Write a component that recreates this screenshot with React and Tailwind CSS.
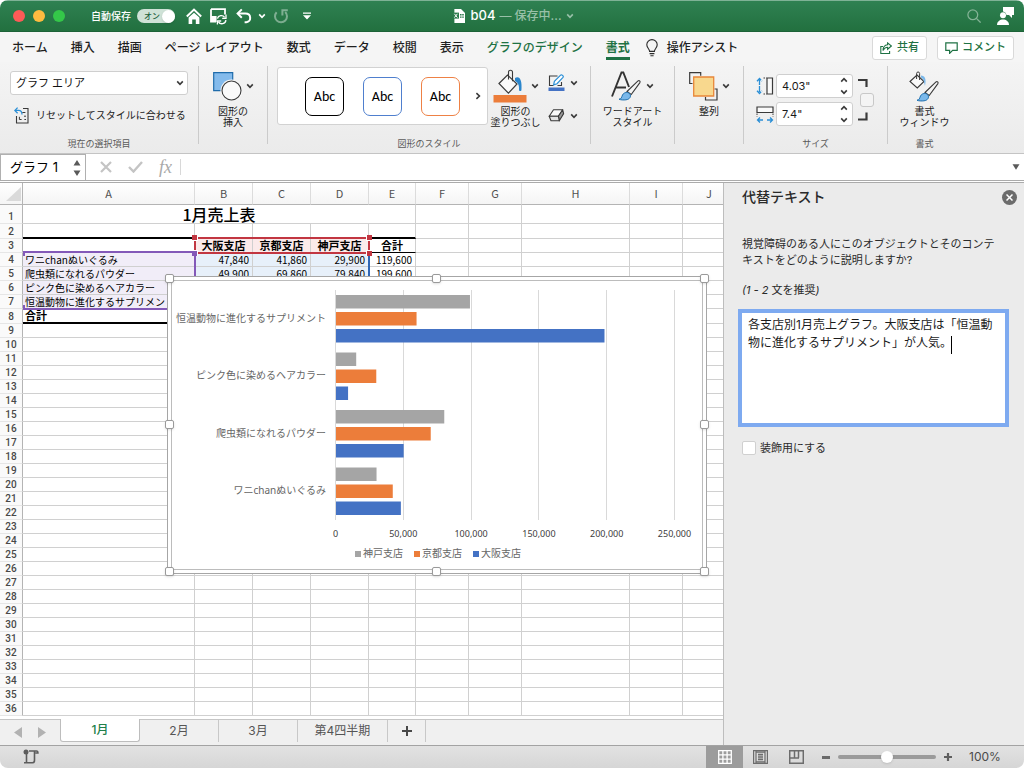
import React from "react";

const COLS = ["A", "B", "C", "D", "E", "F", "G", "H", "I", "J"];

const DATA = {
  4: { name: "ワニchanぬいぐるみ", cells: ["47,840", "41,860", "29,900"], sum: "119,600" },
  5: { name: "爬虫類になれるパウダー", cells: ["49,900", "69,860", "79,840"], sum: "199,600" },
  6: { name: "ピンク色に染めるヘアカラー", cells: ["", "", ""], sum: "" },
  7: { name: "恒温動物に進化するサプリメント", cells: ["", "", ""], sum: "" },
};

const SERIES = [
  { name: "神戸支店", color: "#a5a5a5" },
  { name: "京都支店", color: "#ec7d3a" },
  { name: "大阪支店", color: "#4472c4" },
];

const GROUPS = [
  { name: "恒温動物に進化するサプリメント", values: [98800, 59400, 198000] },
  { name: "ピンク色に染めるヘアカラー", values: [14900, 29700, 8900] },
  { name: "爬虫類になれるパウダー", values: [79840, 69860, 49900] },
  { name: "ワニchanぬいぐるみ", values: [29900, 41860, 47840] },
];

const TICKS = ["0", "50,000", "100,000", "150,000", "200,000", "250,000"];

function Chevron({ className = "text-[#3a3a3a]" }) {
  return (
    <svg className={"h-2 w-2 shrink-0 " + className} viewBox="0 0 8 8" fill="none" stroke="currentColor" strokeWidth="1.6">
      <path d="M1.2 2.4 4 5.4 6.8 2.4" />
    </svg>
  );
}

function TitleBar() {
  return (
    <header className="flex h-8 shrink-0 items-center border-t border-b border-t-[#7fb296] border-b-[#1d6238] bg-linear-to-b from-[#2f8152] to-[#22703f] text-white">
      <div className="flex flex-1 items-center pl-[13px]">
        <div className="flex gap-2">
          <button aria-label="閉じる" className="size-3 rounded-full bg-[#fc5b57]" />
          <button aria-label="最小化" className="size-3 rounded-full bg-[#fdbb40]" />
          <button aria-label="拡大" className="size-3 rounded-full bg-[#34c749]" />
        </div>
        <label htmlFor="autosave" className="ml-[26px] text-[10px] font-medium">自動保存</label>
        <button id="autosave" role="switch" aria-checked="true" className="ml-[6px] flex h-[14px] w-[38px] items-center justify-between rounded-full bg-[#cfe2d7] pl-[7px] text-[8px] font-medium text-[#22603c]">
          オン
          <span className="size-[13px] rounded-full bg-white shadow" />
        </button>
        <button aria-label="ホーム" className="ml-[11px]">
          <svg className="h-4 w-4" viewBox="0 0 16 16" fill="none">
            <path d="M.8 8.4 8 1.6l7.2 6.8" stroke="#fff" strokeWidth="2" />
            <path d="M2.6 9.6 8 4.7l5.4 4.9V16H9.8v-4.4H6.2V16H2.6z" fill="#fff" />
          </svg>
        </button>
        <button aria-label="保存" className="ml-2">
          <svg className="h-[17px] w-[17px]" viewBox="0 0 17 17" fill="none">
            <path d="M1 1.2h14v5.2M1 1.2v12.4h5" stroke="#fff" strokeWidth="1.8" />
            <path d="M1 8h5.6v6H2.4L1 12.6z" fill="#fff" />
            <path d="M7.4 10.6a4 4 0 0 1 7.2-1.2M15.9 12.2a4 4 0 0 1-7.4 1.6" stroke="#fff" strokeWidth="1.4" />
            <path d="M16 6.6v3.8h-3.8M7.4 16.6v-3.6h3.8" stroke="#fff" strokeWidth="1.3" />
          </svg>
        </button>
        <button aria-label="元に戻す" className="ml-[9px]">
          <svg className="h-4 w-4" viewBox="0 0 16 16" fill="none" stroke="#fff" strokeWidth="2">
            <path d="M5.8 1.4 1.6 5.6l4.2 4.2" />
            <path d="M2 5.6h7.4c6.2 0 6.2 8.2 1 8.6H8.6" />
          </svg>
        </button>
        <button aria-label="元に戻す履歴" className="ml-[6px]"><Chevron className="text-white" /></button>
        <button aria-label="繰り返し" className="ml-[7px] opacity-40">
          <svg className="h-4 w-4" viewBox="0 0 16 16" fill="none" stroke="#fff" strokeWidth="2">
            <path d="M3.6 4.2a6 6 0 1 0 8.6-.2" />
            <path d="M9.4 7.4V2.2h5.4" />
          </svg>
        </button>
        <button aria-label="ツールバーのカスタマイズ" className="ml-[14px]">
          <svg className="h-2 w-2" viewBox="0 0 8 8" fill="#fff"><path d="M0 .4h8v1.4H0zM0 3.2h8L4 7.6z" /></svg>
        </button>
      </div>
      <div className="flex items-center text-[13px] font-medium">
        <svg className="mr-[5px] h-[14px] w-3" viewBox="0 0 12 14">
          <path d="M1.4 0H8l4 4v10H1.4z" fill="#fff" />
          <path d="M0 3.6h6v6H0z" fill="#2b7a4c" />
          <path d="m1.4 4.8 3 3.8M4.4 4.8l-3 3.8" stroke="#fff" strokeWidth="1" />
          <path d="M7 5h1.6v1.4H7zM9.2 5h1.6v1.4H9.2zM7 7.4h1.6v1.4H7zM9.2 7.4h1.6v1.4H9.2z" fill="#2b7a4c" />
        </svg>
        <span>b04</span>
        <span className="ml-1 text-xs text-[#98c0a8]">— 保存中...</span>
        <Chevron className="ml-1 text-[#98c0a8]" />
      </div>
      <div className="flex flex-1 items-center justify-end gap-4 pr-[10px]">
        <button aria-label="検索">
          <svg className="h-[14px] w-[14px]" viewBox="0 0 14 14" fill="none" stroke="#84b396" strokeWidth="1.3">
            <circle cx="5.8" cy="5.8" r="4.9" /><path d="m9.4 9.4 4.2 4.2" />
          </svg>
        </button>
        <button aria-label="アカウント">
          <svg className="h-[18px] w-[17px]" viewBox="0 0 17 18" fill="#fff">
            <path d="M6 0h11v8h-2v3l-3-3H9.4A4 4 0 0 0 6 4.4z" />
            <circle cx="6" cy="8.3" r="3" />
            <path d="M0 18c0-7.4 12-7.4 12 0z" />
          </svg>
        </button>
      </div>
    </header>
  );
}

function RibbonTabs() {
  const tabs = ["ホーム", "挿入", "描画", "ページ レイアウト", "数式", "データ", "校閲", "表示"];
  return (
    <nav className="flex h-[30px] shrink-0 items-center bg-[#f5f5f5] pt-[3px] pb-[2px] pl-3 text-xs font-medium text-[#1f1f1f]">
      <div className="flex h-full items-center gap-[23px] whitespace-nowrap">
        {tabs.map((t) => (
          <button key={t}>{t}</button>
        ))}
        <button className="text-[#1f7244]">グラフのデザイン</button>
        <button className="h-full border-y-3 border-t-transparent border-b-[#1f7244] font-bold text-[#1f7244]">書式</button>
      </div>
      <button className="ml-4 flex items-center gap-[9px] whitespace-nowrap">
        <svg className="h-[18px] w-3" viewBox="0 0 12 18" fill="none" stroke="#2b2b2b" strokeWidth="1.1">
          <path d="M3.6 12.4c0-2.6-2.8-3.4-2.8-6.6a5.2 5.2 0 0 1 10.4 0c0 3.2-2.8 4-2.8 6.6z" />
          <path d="M3.6 14.6h4.8M4.4 16.8h3.2" />
        </svg>
        操作アシスト
      </button>
      <div className="ml-auto flex gap-[10px] pr-[10px] whitespace-nowrap text-[#1f7244]">
        <button className="flex h-6 w-[55px] items-center justify-center gap-[5px] rounded-[3px] border border-[#d9d9d9] bg-white">
          <svg className="h-3 w-3" viewBox="0 0 12 12" fill="none" stroke="currentColor" strokeWidth="1.1">
            <path d="M3 4.5H.8v7h8.8V9" />
            <path d="M7.6.9 11.4 4 7.6 7.2V5.3C5.2 5.3 4 6.6 3 8.6c0-3.6 1.8-5.6 4.600-5.900z" />
          </svg>
          <span className="text-[11px]">共有</span>
        </button>
        <button className="flex h-6 w-[77px] items-center justify-center gap-1 rounded-[3px] border border-[#d9d9d9] bg-white">
          <svg className="h-3 w-[13px]" viewBox="0 0 13 12" fill="none" stroke="currentColor" strokeWidth="1.2">
            <path d="M.8.8h11.4v7.6H7.6l-3 3v-3H.8z" />
          </svg>
          <span className="text-[11px]">コメント</span>
        </button>
      </div>
    </nav>
  );
}

function Group({ caption, width, children, last }) {
  return (
    <section className={"flex h-[78px] shrink-0 flex-col " + (last ? "" : "border-r border-[#cbcbcb] ") + width}>
      <div className="flex h-[71px] shrink-0">{children}</div>
      <div className="h-[7px] text-center text-[9px] leading-[14px] text-[#5a5a5a]">{caption}</div>
    </section>
  );
}

function BigButton({ icon, lines, className = "" }) {
  return (
    <button className={"flex flex-col items-center text-[10px] leading-[11px] whitespace-nowrap text-[#1d1d1d] " + className}>
      <span className="flex h-10 items-center gap-1">{icon}</span>
      {lines.map((l) => (
        <span key={l}>{l}</span>
      ))}
    </button>
  );
}

function Brush({ x = 0, y = 0 }) {
  return (
    <g transform={`translate(${x} ${y})`}>
      <path d="M8 11.5 19 .9c1.2-.9 2.6.4 1.9 1.7l-8.7 11.900z" fill="#f5f5f5" stroke="#3a3a3a" strokeWidth="1.1" />
      <path d="M0 19.2c2.6 0 2.4-2 3.6-4.4 1.4-2.600 5.600-3.400 7.400-.6 1.400 2.400-.4 5.200-4 5.600-2.600.3-5.200.2-7-.6z" fill="#7ab8ea" stroke="#1d6fae" strokeWidth="1" />
    </g>
  );
}

function SizeField({ id, label, value, icon }) {
  return (
    <div className="flex h-6 items-center">
      <label htmlFor={id} aria-label={label} className="w-5">{icon}</label>
      <div className="flex h-6 w-[77px] items-center rounded-[3px] border border-[#cfcfcf] bg-white pr-[4px] pl-[5px]">
        <input id={id} defaultValue={value} className="w-0 flex-1 font-[family-name:Inter,sans-serif] text-[11px] text-[#1a1a1a] outline-none" />
        <span className="flex flex-col gap-1">
          <button aria-label={label + "を増やす"} className="rotate-180"><Chevron /></button>
          <button aria-label={label + "を減らす"}><Chevron /></button>
        </span>
      </div>
    </div>
  );
}

function Ribbon() {
  return (
    <div className="flex h-[92px] shrink-0 items-start border-b border-[#c4c4c4] bg-linear-to-b from-[#f4f4f4] to-[#ebebeb] pt-1">
      <Group caption="現在の選択項目" width="w-[199px]">
        <div className="flex flex-col gap-2 pt-[5px] pl-[10px]">
          <div className="relative flex items-center">
            <select aria-label="グラフ要素" className="h-6 w-[178px] appearance-none rounded-[3px] border border-[#cfcfcf] bg-white pl-[5px] text-[11px] text-[#111]">
              <option>グラフ エリア</option>
            </select>
            <span className="pointer-events-none absolute right-1"><Chevron /></span>
          </div>
          <button className="flex h-6 items-center gap-[7px] pl-1 text-[10px] whitespace-nowrap text-[#1a1a1a]">
            <svg className="h-[17px] w-[15px]" viewBox="0 0 15 17" fill="none">
              <path d="M9 1.500h5v14.500H2.500V9" stroke="#3a3a3a" strokeWidth="1.100" />
              <path d="M3.600.6.900 3.400l2.700 2.800M1 3.400h3.600c2.600 0 3.400 1.800 3.400 4.200" stroke="#2b8fd6" strokeWidth="1.300" />
              <path d="M8.400 5.500h3M10.400 12.500h1.600M5.400 9.800v2.700h2.200M10 9.200h2" stroke="#3a3a3a" strokeWidth="1" />
            </svg>
            リセットしてスタイルに合わせる
          </button>
        </div>
      </Group>

      <Group caption="" width="w-[69px]">
        <BigButton
          className="w-full"
          lines={["図形の", "挿入"]}
          icon={
            <>
              <svg className="h-[29px] w-[29px]" viewBox="0 0 29 29">
                <path d="M.7.700h19v18H.7z" fill="#84bbec" stroke="#1f6cab" strokeWidth="1.200" />
                <circle cx="18.500" cy="18.500" r="11" fill="#f5f5f5" />
                <circle cx="18.500" cy="18.500" r="9.500" fill="#fafafa" stroke="#3a3a3a" strokeWidth="1.100" />
              </svg>
              <Chevron />
            </>
          }
        />
      </Group>

      <Group caption="図形のスタイル" width="w-[323px]">
        <div className="mt-px ml-[9px] flex h-[58px] w-[211px] items-center rounded-[3px] border border-[#d2d2d2] bg-white pl-[27px] text-[14px] font-[family-name:Carlito,Lato,sans-serif] font-medium text-black">
          <button className="size-[39px] rounded-[7px] border-[1.5px] border-black">Abc</button>
          <button className="ml-[19px] size-[39px] rounded-[7px] border-[1.5px] border-[#4f7fce]">Abc</button>
          <button className="ml-[19px] size-[39px] rounded-[7px] border-[1.5px] border-[#ee8145]">Abc</button>
          <button aria-label="その他のスタイル" className="ml-[14px] -rotate-90"><Chevron /></button>
        </div>
        <BigButton
          className="ml-1 w-[47px]"
          lines={["図形の", "塗りつぶし"]}
          icon={
            <>
              <svg className="h-[34px] w-[34px] shrink-0" viewBox="0 0 34 34" fill="none">
                <path d="M6 14.500 14.500 6l9.500 9-8.600 9.200z" fill="#fafafa" stroke="#3a3a3a" strokeWidth="1.200" />
                <path d="M15.500 10.500V3.200c0-2.600 4-2.600 4 0v9" stroke="#3a3a3a" strokeWidth="1.100" />
                <path d="M22 9c4.600-2.600 7.400 2 6.400 12.500-1.600 1.400-2.600.2-2.400-1.500.2-3.600-.6-6-4-8z" fill="#2b86cc" />
                <path d="M.500 26h33v7.500H.500z" fill="#ec7d3a" />
              </svg>
              <Chevron />
            </>
          }
        />
        <div className="ml-[9px] flex flex-col gap-[17px] pt-2">
          <button aria-label="枠線" className="flex items-center gap-[5px]">
            <svg className="h-[18px] w-[17px]" viewBox="0 0 17 18" fill="none">
              <path d="M9.500 2H1.500v9.500h4M13.500 8v3.500h-4" stroke="#3a3a3a" strokeWidth="1.100" />
              <path d="m5.600 10.800.8-3.400 6.200-6.200c1-1 3.400.8 2.400 2.200L9 9.700z" fill="#fff" stroke="#2b8fd6" strokeWidth="1.200" />
              <path d="M.500 13.500h16V17H.500z" fill="#4472c4" />
            </svg>
            <Chevron />
          </button>
          <button aria-label="効果" className="flex items-center gap-[5px]">
            <svg className="h-[13px] w-[17px]" viewBox="0 0 17 13" fill="none" stroke="#3a3a3a" strokeWidth="1.100" strokeLinejoin="round">
              <path d="M5.500.8h9.200L10.400 7.200H1.200z" fill="#fafafa" />
              <path d="m10.400 7.200 4.300-6.400.9 3.800-4.300 7.200z" fill="#9a9a9a" />
              <path d="M1.200 7.200h9.200l.9 4.600H3z" fill="#e4e4e4" />
            </svg>
            <Chevron />
          </button>
        </div>
      </Group>

      <Group caption="" width="w-[84px]">
        <BigButton
          className="w-full"
          lines={["ワードアート", "スタイル"]}
          icon={
            <>
              <svg className="h-[30px] w-[31px]" viewBox="0 0 31 30" fill="none">
                <path d="M1 25.500 10.500 1.500h1.800L18 16M5 16.500h10" stroke="#333" strokeWidth="1.900" />
                <Brush x="8" y="9" />
              </svg>
              <Chevron />
            </>
          }
        />
      </Group>

      <Group caption="" width="w-[69px]">
        <BigButton
          className="w-full"
          lines={["整列"]}
          icon={
            <>
              <svg className="h-[29px] w-[29px]" viewBox="0 0 29 29" fill="none">
                <path d="M3.500 11.500H.700V.700h11v3M25.500 17H28v11H16.500v-3" stroke="#3a3a3a" strokeWidth="1.200" />
                <path d="M4.700 5h20v19h-20z" fill="#f8d88e" stroke="#e8873a" strokeWidth="1.300" />
              </svg>
              <Chevron />
            </>
          }
        />
      </Group>

      <Group caption="サイズ" width="w-[144px]">
        <div className="flex flex-col gap-1 pt-2 pl-3">
          <SizeField
            id="shape-height"
            label="高さ"
            value={'4.03"'}
            icon={
              <svg className="h-[18px] w-[18px]" viewBox="0 0 18 18" fill="none">
                <path d="M3.500 2v14M1 4.200 3.500 1.500 6 4.200M1 13.800l2.500 2.700L6 13.800" stroke="#2b8fd6" strokeWidth="1.300" strokeDasharray="6 1" />
                <path d="M7.500 1h3M7.500 17h3" stroke="#3a3a3a" strokeDasharray="1.500 1" />
                <path d="M11 1h5.500v16H11z" stroke="#3a3a3a" fill="#fafafa" strokeWidth="1.200" />
              </svg>
            }
          />
          <SizeField
            id="shape-width"
            label="幅"
            value={'7.4"'}
            icon={
              <svg className="h-[18px] w-[18px]" viewBox="0 0 18 18" fill="none">
                <path d="M1 2h16v5.500H1z" stroke="#3a3a3a" fill="#fafafa" strokeWidth="1.200" />
                <path d="M1 8.500v3M17 8.500v3" stroke="#3a3a3a" strokeDasharray="1.500 1" />
                <path d="M2 15h5M11 15h5M4 12.500 1.500 15 4 17.500M14 12.500l2.500 2.500-2.500 2.500" stroke="#2b8fd6" strokeWidth="1.300" />
              </svg>
            }
          />
        </div>
        <div className="ml-[5px] flex flex-col items-start gap-[5px] pt-3">
          <svg className="h-[10px] w-[10px]" viewBox="0 0 10 10" fill="none" stroke="#3a3a3a" strokeWidth="2.200"><path d="M0 2h8.500v7" /></svg>
          <input type="checkbox" aria-label="縦横比を固定" className="ml-[2px] size-[14px] appearance-none rounded-[3px] border border-[#c8c8c8] bg-[#f4f4f4]" />
          <svg className="h-[10px] w-[10px]" viewBox="0 0 10 10" fill="none" stroke="#3a3a3a" strokeWidth="2.200"><path d="M0 7.500h8.500v-7" /></svg>
        </div>
      </Group>

      <Group caption="書式" width="w-[73px]" last>
        <BigButton
          className="w-full"
          lines={["書式", "ウィンドウ"]}
          icon={
            <svg className="h-[31px] w-[31px]" viewBox="0 0 31 31" fill="none">
              <path d="M1 10.500 8 4l7 6.500-6.700 6.500z" fill="#fafafa" stroke="#3a3a3a" strokeWidth="1.100" />
              <path d="M7.600 8V2.400c0-1.900 3-1.900 3 0V9" stroke="#3a3a3a" />
              <path d="M12 4.500c4 0 5.500 3.500 4 10.500-1-4-1-7-4-8.500z" fill="#7ab8ea" />
              <Brush x="8" y="10" />
            </svg>
          }
        />
      </Group>
    </div>
  );
}

function FormulaBar() {
  return (
    <div className="flex h-[29px] shrink-0 items-center border-b-3 border-double border-[#ababab] bg-white">
      <div className="flex h-full w-[86px] items-center border border-b-0 border-[#b0b0b0] pr-1 pl-[9px]">
        <input aria-label="名前ボックス" defaultValue="グラフ 1" className="w-0 flex-1 text-[13px] text-black outline-none" />
        <svg className="h-[18px] w-2" viewBox="0 0 8 18" fill="#5a5a5a"><path d="M4 1 7.500 6.500h-7zM4 17 .500 11.500h7z" /></svg>
      </div>
      <button aria-label="キャンセル" className="ml-[14px]">
        <svg className="h-3 w-3" viewBox="0 0 12 12" stroke="#c4c4c4" strokeWidth="2.200"><path d="m1 1 10 10M11 1 1 11" /></svg>
      </button>
      <button aria-label="入力" className="ml-4">
        <svg className="h-3 w-[15px]" viewBox="0 0 15 12" fill="none" stroke="#c4c4c4" strokeWidth="2.400"><path d="m1 6 4.500 4.500L14 1" /></svg>
      </button>
      <button aria-label="関数の挿入" className="ml-4 font-[family-name:'Liberation_Serif',serif] text-[18px] leading-5 text-[#a9a9a9] italic">fx</button>
      <input aria-label="数式" className="ml-2 h-4 w-0 flex-1 border-l border-[#d8d8d8] outline-none" />
      <button aria-label="数式バーを展開" className="mr-1">
        <svg className="h-[6px] w-2" viewBox="0 0 8 6" fill="#5a5a5a"><path d="M.500.300h7L4 5.800z" /></svg>
      </button>
    </div>
  );
}

function Sheet() {
  const rows = Array.from({ length: 36 }, (_, i) => i + 1);
  const height = (n) => (n === 1 ? "h-[19px] leading-[18px]" : n === 2 || n === 8 ? "h-[15px] leading-[13px]" : "h-[14px] leading-[13px]");
  const cell = "border-r border-b border-[#d0d0d0] whitespace-nowrap ";
  return (
    <table className="w-full table-fixed border-separate border-spacing-0 font-[family-name:'Noto_Sans_CJK_JP',sans-serif] text-[10px] text-black">
      <colgroup>
        <col className="w-[23px]" />
        <col className="w-[172px]" />
        <col className="w-[58px]" />
        <col className="w-[58px]" />
        <col className="w-[58px]" />
        <col className="w-[47px]" />
        <col className="w-[53px]" />
        <col className="w-[53px]" />
        <col className="w-[108px]" />
        <col className="w-[53px]" />
        <col />
      </colgroup>
      <thead>
        <tr className="h-[22px] bg-linear-to-b from-white to-[#f4f4f4] text-[11px] leading-[21px] text-[#505050]">
          <th className="border-r border-b border-[#b4b4b4]">
            <svg className="ml-[6px] block h-4 w-4" viewBox="0 0 16 16" fill="#dadada"><path d="M15 1v14H0z" /></svg>
          </th>
          {COLS.map((c) => (
            <th key={c} className={"border-b border-b-[#b4b4b4] p-0 font-normal " + (c === "J" ? "pl-3" : "border-r border-r-[#dcdcdc]")}>{c}</th>
          ))}
        </tr>
      </thead>
      <tbody>
        {rows.map((n) => {
          const d = DATA[n];
          const black = n === 2 || n === 8 ? "border-b-2 border-b-black " : "";
          return (
            <tr key={n} className={height(n)}>
              <th scope="row" className="border-r border-b border-r-[#b4b4b4] border-b-[#e6e6e6] bg-[#fafafa] p-0 align-bottom font-[family-name:Roboto,sans-serif] leading-[13px] font-medium text-[#484848]">{n}</th>
              {n === 1 ? (
                <td colSpan={5} className={cell + "p-0 text-center text-base leading-[18px] font-medium"}>1月売上表</td>
              ) : (
                <>
                  <td className={cell + black + "p-0 pl-[2px] " + (d ? "bg-[#f1edf8]" : "")}>
                    {d ? d.name : n === 8 ? <b className="text-[11px]">合計</b> : null}
                  </td>
                  {["大阪支店", "京都支店", "神戸支店"].map((name, i) => (
                    <td
                      key={name}
                      className={cell + black + (n === 3 ? "bg-[#fbeaea] p-0 text-center text-[11px] font-bold" : d ? "border-[#c9d3df] bg-[#e7f0fa] p-0 pr-[3px] text-right" : "p-0")}
                    >
                      {n === 3 ? name : d ? d.cells[i] : null}
                    </td>
                  ))}
                  <td className={cell + black + (n === 3 ? "border-b-black p-0 text-center text-[11px] font-bold" : "p-0 pr-[3px] text-right")}>
                    {n === 3 ? "合計" : d ? d.sum : null}
                  </td>
                </>
              )}
              {["F", "G", "H", "I", "J"].map((c) => (
                <td key={c} className={"border-b border-[#d0d0d0] p-0 " + (c === "J" ? "" : "border-r")} />
              ))}
            </tr>
          );
        })}
      </tbody>
    </table>
  );
}

function RangeOutlines() {
  return (
    <>
      <div className="absolute top-[68px] left-[23px] h-[59px] w-[173px] border-2 border-l-0 border-[#8359b8]">
        <span className="absolute top-0 left-0 h-[3px] w-[2px] bg-[#8359b8]" />
        <span className="absolute bottom-0 left-0 h-[3px] w-[2px] bg-[#8359b8]" />
      </div>
      <div className="absolute top-[70px] left-[368px] h-[57px] w-[2px] bg-[#2f66b5]" />
      <div className="absolute top-[54px] left-[194px] h-[17px] w-[176px] border-2 border-[#c23641]">
        <span className="absolute -top-1 -left-1 size-[6px] border-r border-b border-white bg-[#c23641]" />
        <span className="absolute -top-1 -right-1 size-[6px] border-b border-l border-white bg-[#c23641]" />
        <span className="absolute -right-1 -bottom-1 size-[6px] border-t border-l border-white bg-[#c23641]" />
        <span className="absolute -bottom-1 -left-1 size-[6px] border-t border-r border-white bg-[#8359b8]" />
      </div>
    </>
  );
}

function Handle({ className }) {
  return <span className={"absolute size-[9px] rounded-[2px] border border-[#9a9a9a] bg-white shadow-sm " + className} />;
}

function Chart() {
  const x0 = 168.5;
  const step = 67.8;
  return (
    <div className="absolute top-[93px] left-[167px] h-[298px] w-[540px] border border-[#a6a6a6] bg-white">
      <div className="h-full w-full border-3 border-white">
        <div className="h-full w-full border border-[#bcbcbc]" />
      </div>
      <svg className="absolute -top-px -left-px h-[298px] w-[540px] font-[family-name:'Noto_Sans','Noto_Sans_CJK_JP',sans-serif]" viewBox="0 0 540 298">
        {TICKS.map((t, i) => (
          <g key={t}>
            <path d={`M${Math.floor(x0 + i * step) + 0.5} 14v230`} stroke="#d9d9d9" />
            <text x={x0 + i * step} y="261" textAnchor="middle" fontSize="9" fill="#404040">{t}</text>
          </g>
        ))}
        {GROUPS.map((g, gi) => (
          <g key={g.name}>
            <text x="159" y={45.5 + gi * 57.5} textAnchor="end" fontSize="10" fill="#666">{g.name}</text>
            {g.values.map((v, i) => (
              <rect key={i} x={x0 + 0.5} y={19 + gi * 57.5 + i * 17} width={(v / 50000) * step} height="13.5" fill={SERIES[i].color} />
            ))}
          </g>
        ))}
        {SERIES.map((s, i) => (
          <g key={s.name}>
            <rect x={188 + i * 59} y="275" width="6" height="6" fill={s.color} />
            <text x={196 + i * 59} y="281" fontSize="10" fill="#666">{s.name}</text>
          </g>
        ))}
      </svg>
      <Handle className="-top-[3px] -left-[3px]" />
      <Handle className="-top-[3px] left-[264px]" />
      <Handle className="-top-[3px] -right-[3px]" />
      <Handle className="top-[143px] -left-[3px]" />
      <Handle className="top-[143px] -right-[3px]" />
      <Handle className="-bottom-[3px] -left-[3px]" />
      <Handle className="-bottom-[3px] left-[264px]" />
      <Handle className="-right-[3px] -bottom-[3px]" />
    </div>
  );
}

function SheetTabs() {
  const tab = "h-[22px] border-r border-[#c8c8c8] pb-px ";
  return (
    <div className="flex h-[26px] shrink-0 items-start border-t border-[#c6c6c6] bg-[#f0f0f0] text-xs text-[#555]">
      <div className="flex h-[25px] w-[60px] items-center gap-4 pl-[14px]">
        <button aria-label="前のシート"><svg className="h-[11px] w-2" viewBox="0 0 8 11" fill="#b2b2b2"><path d="M8 0v11L0 5.500z" /></svg></button>
        <button aria-label="次のシート"><svg className="h-[11px] w-2" viewBox="0 0 8 11" fill="#b2b2b2"><path d="M0 0v11l8-5.500z" /></svg></button>
      </div>
      <button className="-mt-px h-[23px] w-20 rounded-b-[3px] border border-t-0 border-[#bdbdbd] bg-white font-medium text-[#21804a]">1月</button>
      <button className={tab + "w-[79px]"}>2月</button>
      <button className={tab + "w-[79px]"}>3月</button>
      <button className={tab + "w-[90px]"}>第4四半期</button>
      <button aria-label="シートを追加" className={tab + "flex w-[38px] items-center justify-center"}>
        <svg className="h-[10px] w-[10px]" viewBox="0 0 10 10" stroke="#484848" strokeWidth="2"><path d="M5 0v10M0 5h10" /></svg>
      </button>
    </div>
  );
}

function AltTextPane() {
  return (
    <aside className="w-[301px] shrink-0 border-l border-[#bdbdbd] bg-[#ebebeb] pr-[7px] pl-[18px] text-[11px] leading-4 text-[#2a2a2a]">
      <div className="flex h-7 items-center justify-between">
        <h2 className="text-sm font-medium">代替テキスト</h2>
        <button aria-label="閉じる" className="flex size-[15px] items-center justify-center rounded-full bg-[#6c6c6c]">
          <svg className="h-[7px] w-[7px]" viewBox="0 0 7 7" stroke="#fff" strokeWidth="1.500"><path d="m.5.500 6 6M6.500.500l-6 6" /></svg>
        </button>
      </div>
      <label htmlFor="alt-text" className="mt-[25px] block">
        視覚障碍のある人にこのオブジェクトとそのコンテ
        <br />
        キストをどのように説明しますか?
      </label>
      <p className="mt-[14px] italic">(1 - 2 <span className="not-italic">文を推奨</span>)</p>
      <div className="relative mt-[15px] mr-3">
        <textarea
          id="alt-text"
          spellCheck={false}
          className="block h-[110px] w-full resize-none bg-white px-[6px] py-[3px] text-xs leading-[18px] text-[#1c1c1c] ring-4 ring-[#7eaaf0] outline-none"
          defaultValue="各支店別1月売上グラフ。大阪支店は「恒温動物に進化するサプリメント」が人気。"
        />
        <span className="absolute top-[23px] left-[209px] h-[18px] w-px bg-black" />
      </div>
      <label className="mt-[17px] flex items-center gap-1">
        <input type="checkbox" className="size-[14px] appearance-none rounded-[2px] border border-[#d0d0d0] bg-white" />
        装飾用にする
      </label>
    </aside>
  );
}

function StatusBar() {
  return (
    <footer className="flex h-[23px] shrink-0 items-center border-t border-[#a3a3a3] bg-linear-to-b from-[#e2e2e2] to-[#d6d6d6]">
      <button aria-label="マクロの記録" className="ml-[23px]">
        <svg className="h-4 w-4" viewBox="0 0 16 16" fill="none" stroke="#5c5c5c" strokeWidth="1.600">
          <circle cx="3" cy="3" r="2.500" fill="#5c5c5c" stroke="none" />
          <path d="M3.500 5v8M1 13.800h8.500c1.500 0 2-.8 2-2.500V2.500M6 2h7.500c1.400 0 1.400 2 1.400 2h-2.500" />
        </svg>
      </button>
      <div className="ml-auto flex h-full items-center">
        <button aria-label="標準表示" className="flex h-full w-[37px] items-center justify-center bg-[#9c9c9c]">
          <svg className="h-[14px] w-[14px]" viewBox="0 0 14 14" stroke="#fff" strokeWidth="1.300" fill="none"><path d="M.7.700h12.600v12.600H.7zM4.900.700v12.600M9.100.700v12.600M.7 4.900h12.600M.7 9.100h12.600" /></svg>
        </button>
        <button aria-label="ページ レイアウト表示" className="ml-[10px]">
          <svg className="h-[14px] w-[15px]" viewBox="0 0 15 14" stroke="#6c6c6c" strokeWidth="1.200" fill="none"><path d="M.6.600h13.800v12.800H.6zM3 1v12M12 1v12M3 2.200h9M3 11.800h9M5 4.300h5M5 6.100h5M5 7.900h5M5 9.700h5" /></svg>
        </button>
        <button aria-label="改ページ プレビュー" className="ml-[21px]">
          <svg className="h-[14px] w-[15px]" viewBox="0 0 15 14" stroke="#6c6c6c" strokeWidth="1.500" fill="none"><path d="M.7.700h13.600v12.600H.7zM5.500.700v7M9.500.700v7M.7 8h9.300" /></svg>
        </button>
        <button aria-label="縮小" className="ml-[18px] h-[3px] w-2 bg-[#6a6a6a]" />
        <input
          type="range"
          aria-label="ズーム"
          defaultValue="50"
          className="ml-2 h-1 w-[98px] appearance-none rounded-full bg-[#9a9a9a] [&::-webkit-slider-thumb]:size-3 [&::-webkit-slider-thumb]:appearance-none [&::-webkit-slider-thumb]:rounded-full [&::-webkit-slider-thumb]:bg-white [&::-webkit-slider-thumb]:shadow"
        />
        <button aria-label="拡大" className="ml-2">
          <svg className="h-2 w-2" viewBox="0 0 8 8" stroke="#5f5f5f" strokeWidth="2.200"><path d="M4 0v8M0 4h8" /></svg>
        </button>
        <span className="w-[72px] pl-[17px] font-[family-name:Inter,sans-serif] text-xs text-[#4a4a4a]">100%</span>
      </div>
    </footer>
  );
}

export default function App() {
  return (
    <div className="flex h-screen flex-col overflow-hidden rounded-lg bg-white font-[family-name:Inter,'Noto_Sans_CJK_JP',sans-serif]">
      <TitleBar />
      <RibbonTabs />
      <Ribbon />
      <FormulaBar />
      <main className="flex min-h-0 flex-1">
        <div className="flex min-w-0 flex-1 flex-col">
          <div className="relative min-h-0 flex-1 overflow-hidden">
            <Sheet />
            <RangeOutlines />
            <Chart />
          </div>
          <SheetTabs />
        </div>
        <AltTextPane />
      </main>
      <StatusBar />
    </div>
  );
}
